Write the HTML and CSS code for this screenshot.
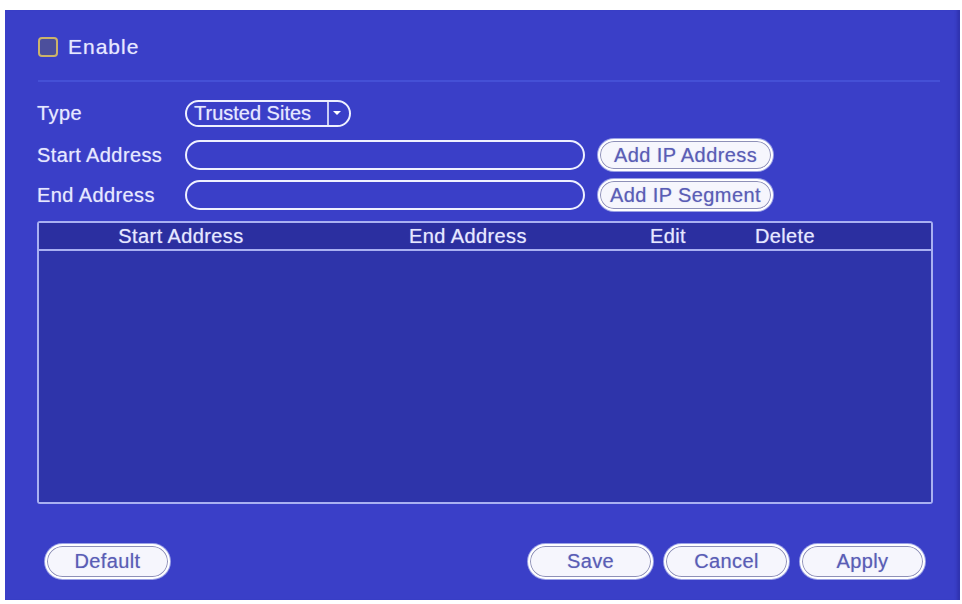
FILE: index.html
```html
<!DOCTYPE html>
<html lang="en">
<head>
    <meta charset="UTF-8">
    <title>IP Filter</title>
    <link rel="stylesheet" href="styles.css">
</head>
<body>
<div class="panel">
    <!-- 启用 -->
    <div class="enable">
        <span class="check"></span>
        <span class="enable-text">Enable</span>
    </div>
    <div class="sep"></div>

    <!-- 表单 -->
    <div class="row row-type">
        <span class="label">Type</span>
        <div class="select">
            <span class="select-text">Trusted Sites</span>
            <span class="select-arrow"></span>
        </div>
    </div>
    <div class="row row-start">
        <span class="label">Start Address</span>
        <div class="input"></div>
        <div class="btn btn-small">Add IP Address</div>
    </div>
    <div class="row row-end">
        <span class="label">End Address</span>
        <div class="input"></div>
        <div class="btn btn-small">Add IP Segment</div>
    </div>

    <!-- 列表 -->
    <div class="list">
        <div class="list-head">
            <span>Start Address</span>
            <span>End Address</span>
            <span>Edit</span>
            <span>Delete</span>
            <span></span>
        </div>
        <div class="list-body"></div>
    </div>

    <!-- 底部按钮 -->
    <div class="footer">
        <div class="btn btn-big">Default</div>
        <div class="footer-right">
            <div class="btn btn-big">Save</div>
            <div class="btn btn-big">Cancel</div>
            <div class="btn btn-big">Apply</div>
        </div>
    </div>
</div>
</body>
</html>
```

FILE: styles.css
```css
*{
    margin: 0;
    padding: 0;
    box-sizing: border-box;
}
body{
    background: #fff;
    font-family: "Liberation Sans", Arial, sans-serif;
    font-size: 20px;
    letter-spacing: 0.4px;
    color: #e6e8ff;
    text-shadow: 0 0 1px rgba(230, 232, 255, 0.6);
    white-space: nowrap;
}
.panel{
    margin: 10px 0 0 5px;
    width: 955px;
    height: 590px;
    padding: 27px 27px 0 32px;
    background: #3a3fc8;
    box-shadow: inset -5px 0 3px -2px #3034b0;
}

/*启用*/
.enable{
    display: flex;
    align-items: center;
    height: 20px;
    margin-left: 1px;
}
.check{
    width: 20px;
    height: 20px;
    margin-right: 10px;
    border: 2px solid #ccb36a;
    border-radius: 4px;
    background: #4c4f9c;
}
.enable-text{
    font-size: 21px;
    letter-spacing: 1px;
}
.sep{
    height: 2px;
    margin: 23px -7px 0 1px;
    background: #4550d6;
}

/*表单行*/
.row{
    display: flex;
    align-items: center;
}
.row-type{
    height: 28px;
    margin-top: 17px;
}
.row-start{
    height: 32px;
    margin-top: 12px;
}
.row-end{
    height: 32px;
    margin-top: 8px;
}
.label{
    width: 148px;
    flex-shrink: 0;
}
.select{
    display: flex;
    align-items: center;
    width: 166px;
    height: 27px;
    border: 2px solid #eef0ff;
    border-radius: 14px;
}
.select-text{
    flex: 1;
    padding-left: 7px;
    line-height: 23px;
    letter-spacing: 0;
}
.select-arrow{
    position: relative;
    width: 19px;
    height: 100%;
    margin-right: 3px;
    border-left: 2px solid #c8ccf4;
}
.select-arrow::after{
    content: "";
    position: absolute;
    left: 4px;
    top: 9px;
    border-left: 4px solid transparent;
    border-right: 4px solid transparent;
    border-top: 4px solid #fff;
}
.input{
    width: 400px;
    height: 30px;
    border: 2px solid #eef0ff;
    border-radius: 15px;
}
.btn{
    display: flex;
    align-items: center;
    justify-content: center;
    background: #f6f6fd;
    border: 2px solid #fff;
    border-radius: 16px;
    box-shadow: inset 0 0 0 1px #8e90b8, 0 0 0 1px #9ca2e6;
    color: #5a5db6;
    text-shadow: 0 0 1px rgba(90, 93, 182, 0.5);
}
.btn-small{
    width: 175px;
    height: 32px;
    margin-left: 13px;
}
.btn-big{
    width: 125px;
    height: 35px;
    border-radius: 18px;
}

/*列表*/
.list{
    width: 896px;
    height: 283px;
    margin-top: 10px;
    border: 2px solid #a9b0f2;
    border-radius: 3px;
    display: flex;
    flex-direction: column;
}
.list-head{
    display: grid;
    grid-template-columns: 284px 290px 110px 124px 1fr;
    height: 28px;
    border-bottom: 2px solid #a9b0f2;
    background: #2b2fa0;
    line-height: 26px;
    text-align: center;
}
.list-body{
    flex: 1;
    background: #2e34aa;
}

/*底部*/
.footer{
    display: flex;
    justify-content: space-between;
    width: 896px;
    margin-top: 40px;
    padding: 0 8px;
}
.footer-right{
    display: flex;
    gap: 11px;
}
```
